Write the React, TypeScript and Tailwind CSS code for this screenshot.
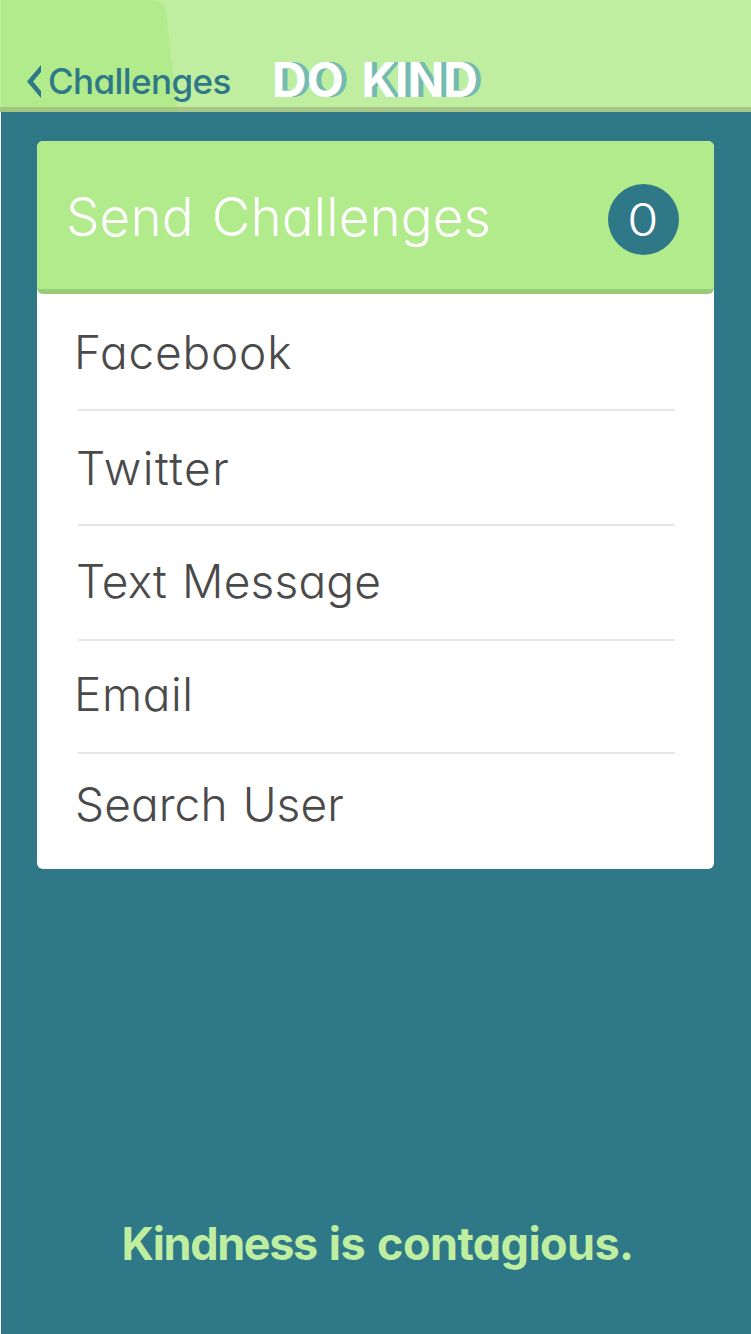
import React from "react";

const rows = [
  { label: "Facebook", box: "h-[117px] border-b-2", text: "-ml-[4px] tracking-[0.8px]" },
  { label: "Twitter", box: "h-[115px] border-b-2", text: "-ml-[2px] tracking-[1.5px]" },
  { label: "Text Message", box: "h-[115px] border-b-2 pb-1", text: "-ml-[2px] tracking-[0.2px] [word-spacing:2px]" },
  { label: "Email", box: "h-[113px] border-b-2 pb-[5px]", text: "-ml-[4px] tracking-[0.6px]" },
  { label: "Search User", box: "h-[115px] pb-[16px]", text: "-ml-[3px] tracking-[0.1px] [word-spacing:2px]" },
];

export default function App() {
  return (
    <div className="flex h-[1334px] w-[751px] flex-col bg-white pl-px font-['Inter',sans-serif] whitespace-nowrap [font-feature-settings:'cv11']">
      <header className="relative -ml-px h-[112px] shrink-0 overflow-hidden bg-[#c0eea1]">
        <svg className="absolute top-0 left-0" width="180" height="112" viewBox="0 0 180 112" aria-hidden="true">
          <path d="M1 0H154Q165 2 166 12L177.500 112H1Z" fill="#b1eb8b" />
        </svg>
        <div className="relative flex h-full items-start pl-[27px] pt-[62px]">
          <button className="flex h-10 w-[245px] items-center text-left text-[35px] leading-10 font-medium text-[#2f7887]">
            <svg width="15" height="34" viewBox="0 0 15 34" aria-hidden="true">
              <path d="M14 0V7L6 16.500L14 26V33L0 16.500Z" fill="#2f7887" />
            </svg>
            <span className="-mt-[2px] pl-[6px] tracking-[-0.6px]">Challenges</span>
          </button>
          <h1 className="-mt-[6px] text-[48px] leading-[48px] font-bold text-white [text-shadow:1px_0_#74bab4,2px_0_#74bab4,3px_0_#74bab4,4px_0_#74bab4,5px_0_#74bab4] [word-spacing:6px]">
            <span className="tracking-[0.2px]">DO</span> <span className="tracking-[-0.9px]">KIND</span>
          </h1>
        </div>
        <div className="absolute inset-x-0 bottom-0 h-[5px] bg-[#96ad78]/60" />
      </header>
      <main className="flex flex-1 flex-col bg-[#2f7887] pr-[37px] pl-9 pt-[29px]">
        <section className="h-[728px] rounded-md bg-white">
          <div className="flex h-[153px] items-center justify-between rounded-md border-b-[5px] border-[#99cc79] bg-[#b1eb8b] pr-[35px] pl-[29px] text-white">
            <h2 className="mt-[3px] text-[53px] leading-[60px] font-light tracking-[0.1px] [word-spacing:3px]">Send Challenges</h2>
            <span className="mt-[9px] flex size-[71px] items-center justify-center rounded-full bg-[#2f7887] text-[45px] leading-none font-light">
              <span className="-ml-[2px] scale-x-112">0</span>
            </span>
          </div>
          <ul className="pr-[39px] pl-[41px] text-[46px] leading-[56px] font-light text-[#4a4a4a]">
            {rows.map((r) => (
              <li key={r.label} className={`flex items-center border-[#e6e6e6] ${r.box}`}>
                <span className={r.text}>{r.label}</span>
              </li>
            ))}
          </ul>
        </section>
        <p className="mt-auto mb-[60px] ml-[4px] text-center text-[45px] leading-[60px] font-bold tracking-[-0.6px] text-[#c0eea1] [word-spacing:2px]">
          <span className="tracking-[-1.4px]">Kindness</span> is contagious.
        </p>
      </main>
    </div>
  );
}
